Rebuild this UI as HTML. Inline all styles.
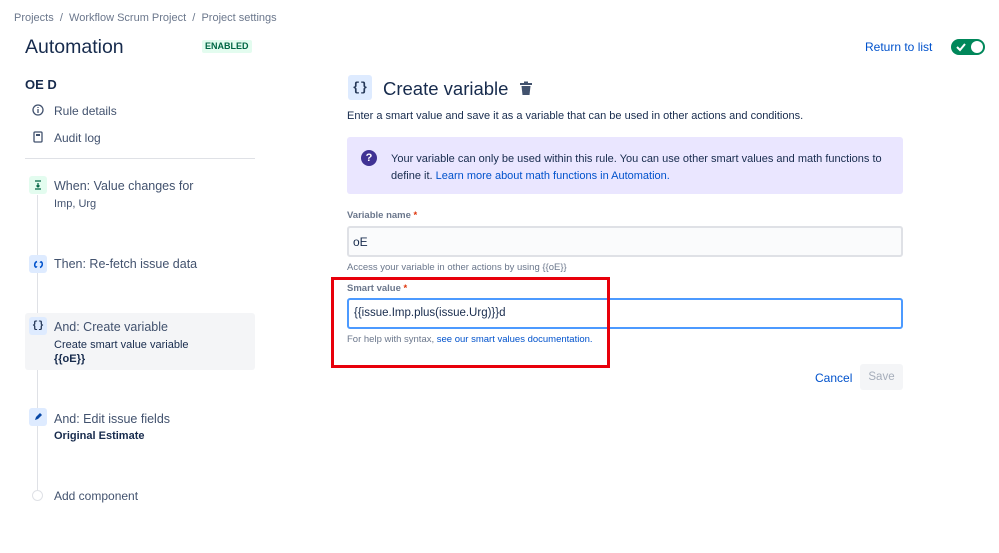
<!DOCTYPE html>
<html><head><meta charset="utf-8"><style>
*{margin:0;padding:0;box-sizing:border-box}
body{width:999px;height:553px;background:#fff;font-family:"Liberation Sans",sans-serif;color:#172b4d;position:relative;overflow:hidden}
.a{position:absolute;white-space:nowrap}
.ic{position:absolute;width:18px;height:18px;border-radius:3px;display:flex;align-items:center;justify-content:center;font-size:10px;font-weight:bold}
.lk{color:#0052cc}
</style></head><body>
<div class="a" style="left:14px;top:12px;font-size:11px;color:#6b778c">Projects &nbsp;/&nbsp; Workflow Scrum Project &nbsp;/&nbsp; Project settings</div>
<div class="a" style="left:25px;top:36px;font-size:19.5px;color:#172b4d">Automation</div>
<div class="a" style="left:202px;top:40px;height:13px;padding:0 3px;background:#e3fcef;color:#006644;font-size:9px;font-weight:bold;line-height:13px;border-radius:2px">ENABLED</div>
<div class="a lk" style="left:865px;top:40px;font-size:12px">Return to list</div>
<div class="a" style="left:951px;top:39px;width:34px;height:16px;border-radius:8px;background:#00875a">
<svg width="12" height="10" style="position:absolute;left:4px;top:3px" viewBox="0 0 12 10"><path d="M2 5l3 3 5-6" stroke="#fff" stroke-width="2" fill="none"/></svg>
<div style="position:absolute;right:2px;top:2px;width:12px;height:12px;border-radius:50%;background:#fff"></div></div>

<div class="a" style="left:25px;top:77px;font-size:13px;font-weight:bold">OE D</div>
<svg class="a" style="left:32px;top:104px" width="12" height="12" viewBox="0 0 12 12"><circle cx="6" cy="6" r="5" stroke="#42526e" stroke-width="1.3" fill="none"/><path d="M6 5v4M6 3v1" stroke="#42526e" stroke-width="1.3"/></svg>
<div class="a" style="left:54px;top:104px;font-size:12px;color:#42526e">Rule details</div>
<svg class="a" style="left:33px;top:131px" width="10" height="12" viewBox="0 0 10 12"><rect x="1" y="1" width="8" height="10" rx="1" stroke="#42526e" stroke-width="1.3" fill="none"/><rect x="3" y="3" width="4" height="2" fill="#42526e"/></svg>
<div class="a" style="left:54px;top:131px;font-size:12px;color:#42526e">Audit log</div>
<div class="a" style="left:25px;top:158px;width:230px;height:1px;background:#dfe1e6"></div>

<div class="a" style="left:37px;top:195px;width:1px;height:300px;background:#dfe1e6"></div>
<div class="a" style="left:25px;top:313px;width:230px;height:57px;background:#f4f5f7;border-radius:3px"></div>

<div class="ic" style="left:29px;top:176px;background:#e3fcef;color:#006644">
<svg width="10" height="10" viewBox="0 0 10 10"><path d="M2 1h6M2 9h6M5 3v4M3.5 5.5L5 7l1.5-1.5" stroke="#006644" stroke-width="1.3" fill="none"/></svg></div>
<div class="a" style="left:54px;top:179px;font-size:12.5px;color:#42526e">When: Value changes for</div>
<div class="a" style="left:54px;top:198px;font-size:11px;color:#42526e">Imp, Urg</div>

<div class="ic" style="left:29px;top:255px;background:#deebff">
<svg width="11" height="11" viewBox="0 0 11 11"><path d="M4 2.5A3.5 3.5 0 0 0 3 8.5M7 8.5A3.5 3.5 0 0 0 8 2.5" stroke="#0052cc" stroke-width="1.5" fill="none"/><path d="M2 7.5l1.5 1.5 1-2zM9 3.5L7.5 2l-1 2z" fill="#0052cc"/></svg></div>
<div class="a" style="left:54px;top:257px;font-size:12.5px;color:#42526e">Then: Re-fetch issue data</div>

<div class="ic" style="left:29px;top:317px;background:#deebff;color:#253858;font-family:'Liberation Mono',monospace">{}</div>
<div class="a" style="left:54px;top:320px;font-size:12.5px;color:#42526e">And: Create variable</div>
<div class="a" style="left:54px;top:339px;font-size:11px;color:#172b4d">Create smart value variable</div>
<div class="a" style="left:54px;top:353px;font-size:11px;font-weight:bold">{{oE}}</div>

<div class="ic" style="left:29px;top:408px;background:#deebff">
<svg width="10" height="10" viewBox="0 0 10 10"><path d="M2 8l1-3 4-4 2 2-4 4z" fill="#0747a6"/></svg></div>
<div class="a" style="left:54px;top:412px;font-size:12.5px;color:#42526e">And: Edit issue fields</div>
<div class="a" style="left:54px;top:430px;font-size:11px;font-weight:bold">Original Estimate</div>

<div class="a" style="left:32px;top:490px;width:11px;height:11px;border-radius:50%;border:1px solid #dfe1e6;background:#fff"></div>
<div class="a" style="left:54px;top:489px;font-size:12px;color:#42526e">Add component</div>

<div class="a" style="left:348px;top:75px;width:24px;height:25px;background:#deebff;border-radius:3px;font-family:'Liberation Mono',monospace;font-size:13px;font-weight:bold;line-height:25px;text-align:center;color:#253858">{}</div>
<div class="a" style="left:383px;top:78px;font-size:18.5px">Create variable</div>
<svg class="a" style="left:519px;top:81px" width="14" height="15" viewBox="0 0 14 15"><rect x="1" y="2" width="12" height="2" fill="#42526e"/><rect x="5" y="0.5" width="4" height="2" fill="#42526e"/><path d="M2.5 5h9l-1 9h-7z" fill="#42526e"/></svg>
<div class="a" style="left:347px;top:110px;font-size:11px;color:#172b4d">Enter a smart value and save it as a variable that can be used in other actions and conditions.</div>

<div class="a" style="left:347px;top:137px;width:556px;height:57px;background:#eae6ff;border-radius:3px"></div>
<div class="a" style="left:361px;top:150px;width:16px;height:16px;border-radius:50%;background:#403294;color:#fff;font-size:11px;font-weight:bold;text-align:center;line-height:16px">?</div>
<div class="a" style="left:391px;top:151px;font-size:11px;line-height:17px;color:#172b4d">Your variable can only be used within this rule. You can use other smart values and math functions to<br>define it. <span class="lk">Learn more about math functions in Automation.</span></div>

<div class="a" style="left:347px;top:210px;font-size:9.5px;font-weight:bold;color:#6b778c">Variable name<span style="color:#de350b"> *</span></div>
<div class="a" style="left:347px;top:226px;width:556px;height:31px;background:#fafbfc;border:2px solid #dfe1e6;border-radius:3px;font-size:12px;padding:7px 4px">oE</div>
<div class="a" style="left:347px;top:262px;font-size:9.5px;color:#6b778c">Access your variable in other actions by using {{oE}}</div>
<div class="a" style="left:347px;top:283px;font-size:9.5px;font-weight:bold;color:#6b778c">Smart value<span style="color:#de350b"> *</span></div>
<div class="a" style="left:347px;top:298px;width:556px;height:31px;background:#fff;border:2px solid #4c9aff;border-radius:3px;font-size:11.5px;padding:7px 5px">{{issue.Imp.plus(issue.Urg)}}d</div>
<div class="a" style="left:347px;top:334px;font-size:9.5px;color:#6b778c">For help with syntax, <span class="lk">see our smart values documentation.</span></div>
<div class="a" style="left:331px;top:277px;width:279px;height:91px;border:3px solid #e8000b"></div>

<div class="a lk" style="left:815px;top:371px;font-size:12px">Cancel</div>
<div class="a" style="left:860px;top:364px;width:43px;height:26px;background:#f4f5f7;border-radius:3px;color:#a5adba;font-size:11.5px;text-align:center;line-height:26px">Save</div>
</body></html>
